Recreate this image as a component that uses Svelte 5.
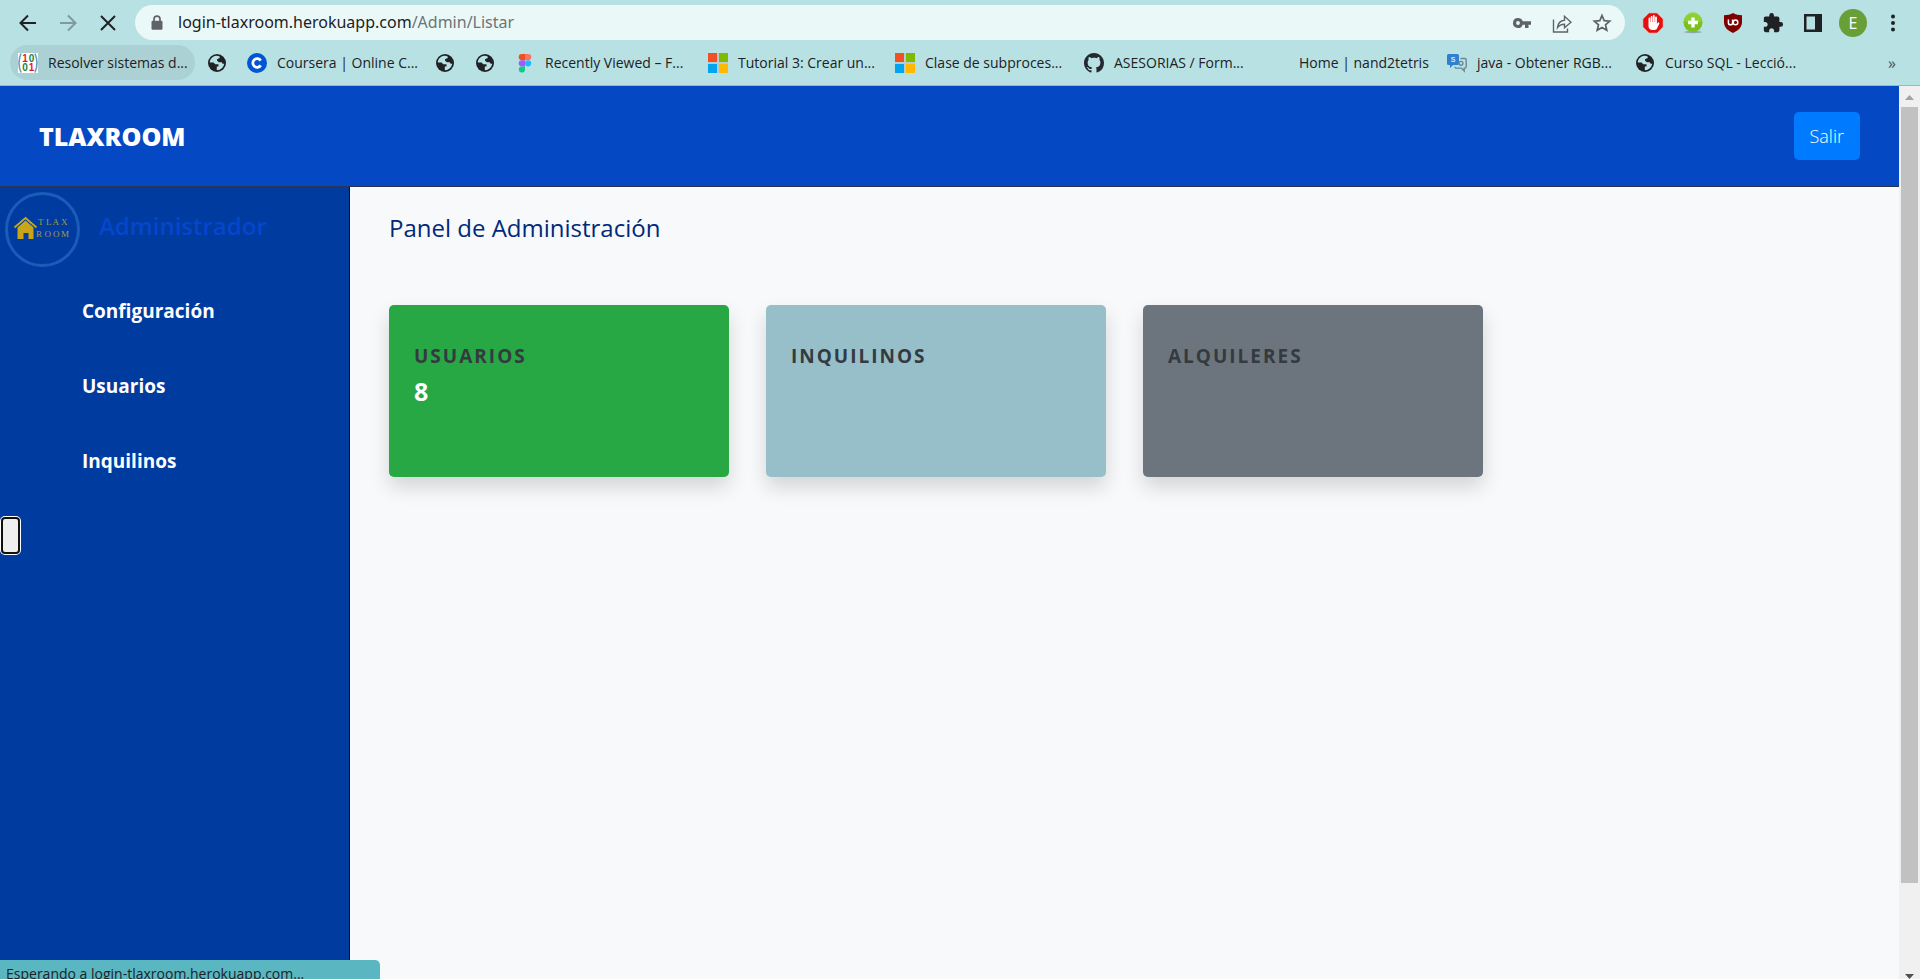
<script>
  const bookmarks = [
    { icon: 'matrix', label: 'Resolver sistemas d...', width: 139, active: true },
    { icon: 'globe', name: 'Sitio guardado' },
    { icon: 'coursera', label: 'Coursera | Online C...', width: 138 },
    { icon: 'globe', name: 'Sitio guardado' },
    { icon: 'globe', name: 'Sitio guardado' },
    { icon: 'figma', label: 'Recently Viewed – F...', width: 143 },
    { icon: 'microsoft', label: 'Tutorial 3: Crear un...', width: 137 },
    { icon: 'microsoft', label: 'Clase de subproces...', width: 139 },
    { icon: 'github', label: 'ASESORIAS / Form...', width: 135 },
    { icon: 'blank', label: 'Home | nand2tetris', width: 128 },
    { icon: 'stack', label: 'java - Obtener RGB...', width: 138 },
    { icon: 'globe', label: 'Curso SQL - Lecció...', width: 139 }
  ];

  const links = ['Configuración', 'Usuarios', 'Inquilinos'];

  const cards = [
    { title: 'Usuarios', value: '8', tone: 'green' },
    { title: 'Inquilinos', value: '', tone: 'teal' },
    { title: 'Alquileres', value: '', tone: 'gray' }
  ];
</script>

{#snippet favicon(kind)}
  {#if kind === 'globe'}
    <svg class="fav" viewBox="0 0 20 20" aria-hidden="true">
      <circle cx="10" cy="10" r="9" fill="#202124" />
      <path d="M9.200 2.800C5.500 3.200 3 6 2.800 9.600h3.800l1.600 1.700h3.300v2.200H9.800v3.700c3.700.1 7.100-2.900 7.400-6.700l-1.300.4-1.200-1.700h-2.900L10 7.600V6.200l2.700-1.200V3.500c-1-.5-2.300-.8-3.500-.7z" fill="#b8e1e4" />
      <path d="M12.300 3.200l1.500 1.200-.6 1.700-2.200.9v1.100h3.300l1.300 1.500 1.700-.5-1.200-3.700z" fill="#202124" />
    </svg>
  {:else if kind === 'matrix'}
    <svg class="fav" viewBox="0 0 20 20" aria-hidden="true">
      <rect width="20" height="20" fill="#fff" />
      <path d="M3 .5Q-1 10 3 19.500M17 .5Q21 10 17 19.500" fill="none" stroke="#6d9dbd" stroke-width="1.600" />
      <g font-family="Liberation Sans, sans-serif" font-weight="700" font-size="10" text-anchor="middle">
        <text x="7" y="9" fill="#e01b24">1</text><text x="13.500" y="9" fill="#26803a">0</text>
        <text x="7" y="18" fill="#26803a">0</text><text x="13.500" y="18" fill="#e01b24">1</text>
      </g>
    </svg>
  {:else if kind === 'coursera'}
    <svg class="fav" viewBox="0 0 20 20" aria-hidden="true">
      <circle cx="10" cy="10" r="10" fill="#0056d2" />
      <path d="M13.700 7.600a4.300 4.300 0 1 0 0 4.800" fill="none" stroke="#fff" stroke-width="2.800" />
    </svg>
  {:else if kind === 'figma'}
    <svg class="fav" viewBox="0 0 20 20" aria-hidden="true">
      <path d="M10 1H6.800a3.100 3.100 0 0 0 0 6.200H10z" fill="#f24e1e" />
      <path d="M10 1h3.200a3.100 3.100 0 0 1 0 6.200H10z" fill="#ff7262" />
      <path d="M10 7.200H6.800a3.100 3.100 0 0 0 0 6.200H10z" fill="#a259ff" />
      <circle cx="13.100" cy="10.300" r="3.100" fill="#1abcfe" />
      <path d="M10 13.400H6.800a3.100 3.100 0 1 0 3.200 3.100z" fill="#0acf83" />
    </svg>
  {:else if kind === 'microsoft'}
    <svg class="fav" viewBox="0 0 20 20" aria-hidden="true">
      <rect width="20" height="20" fill="#b9cdd0" />
      <path d="M0 0h9v9H0z" fill="#f25022" /><path d="M11 0h9v9h-9z" fill="#7fba00" />
      <path d="M0 11h9v9H0z" fill="#00a4ef" /><path d="M11 11h9v9h-9z" fill="#ffb900" />
    </svg>
  {:else if kind === 'github'}
    <svg class="fav" viewBox="0 0 16 16" aria-hidden="true">
      <path fill="#24292f" d="M8 0C3.580 0 0 3.580 0 8c0 3.540 2.290 6.530 5.470 7.590.4.070.55-.17.55-.38 0-.19-.01-.82-.01-1.490-2.010.37-2.530-.49-2.690-.94-.09-.23-.48-.94-.82-1.130-.28-.15-.68-.52-.01-.53.63-.01 1.080.58 1.230.82.72 1.210 1.870.87 2.330.66.07-.52.28-.87.51-1.070-1.780-.2-3.640-.89-3.640-3.950 0-.87.31-1.590.82-2.150-.08-.2-.36-1.020.08-2.120 0 0 .67-.21 2.200.82.64-.18 1.320-.27 2-.27s1.360.09 2 .27c1.530-1.040 2.200-.82 2.200-.82.44 1.100.16 1.920.08 2.120.51.56.82 1.270.82 2.150 0 3.070-1.870 3.750-3.650 3.950.29.25.54.73.54 1.480 0 1.070-.01 1.930-.01 2.200 0 .21.15.46.55.38A8.010 8.010 0 0 0 16 8c0-4.420-3.580-8-8-8z" />
    </svg>
  {:else if kind === 'stack'}
    <svg class="fav" viewBox="0 0 20 20" aria-hidden="true">
      <path d="M1.500 1h9a1.500 1.500 0 0 1 1.500 1.500v8a1.500 1.500 0 0 1-1.500 1.500H6l-3 3v-3H1.500A1.500 1.500 0 0 1 0 10.500v-8A1.500 1.500 0 0 1 1.500 1z" fill="#2f80d0" />
      <text x="6" y="9" font-family="Liberation Sans, sans-serif" font-size="7" font-weight="700" fill="#d5ebf5" text-anchor="middle">S</text>
      <path d="M13.500 5.500h4.300a1.400 1.400 0 0 1 1.400 1.400v6.800a1.400 1.400 0 0 1-1.400 1.400h-.6v3l-2.900-3H9.400A1.400 1.400 0 0 1 8 13.700" fill="none" stroke="#6b8790" stroke-width="1.400" />
      <circle cx="14" cy="10.300" r="1.900" fill="none" stroke="#6b8790" stroke-width="1.400" />
    </svg>
  {:else}
    <span class="fav"></span>
  {/if}
{/snippet}

<div class="window">
  <div class="toolbar">
    <button class="tool" aria-label="Atrás">
      <svg width="20" height="20" viewBox="0 0 20 20"><path d="M18 10H3M10 2.500L2.500 10l7.500 7.500" fill="none" stroke="#202124" stroke-width="2" /></svg>
    </button>
    <button class="tool" aria-label="Adelante">
      <svg width="20" height="20" viewBox="0 0 20 20"><path d="M2 10h15M10 2.500l7.500 7.500-7.500 7.500" fill="none" stroke="#7e9a9d" stroke-width="2" /></svg>
    </button>
    <button class="tool" aria-label="Detener">
      <svg width="20" height="20" viewBox="0 0 20 20"><path d="M3 3l14 14M17 3L3 17" fill="none" stroke="#202124" stroke-width="2" /></svg>
    </button>

    <div class="omnibox">
      <svg width="14" height="16" viewBox="0 0 14 16" aria-hidden="true">
        <path d="M4 7V4.200a3 3 0 0 1 6 0V7" fill="none" stroke="#5f6368" stroke-width="1.700" />
        <rect x="1.500" y="5.800" width="11" height="9" rx="1.200" fill="#5f6368" />
      </svg>
      <div class="url">login-tlaxroom.herokuapp.com<span>/Admin/Listar</span></div>
      <button class="tool" aria-label="Contraseñas">
        <svg width="20" height="20" viewBox="0 0 20 20">
          <path d="M6 5a5 5 0 1 0 4.700 6.700H13V15h3.500v-3.300H19V8.300h-8.300A5 5 0 0 0 6 5zm0 3.100a1.900 1.900 0 1 1 0 3.800 1.900 1.900 0 0 1 0-3.800z" fill="#5f6368" fill-rule="evenodd" />
        </svg>
      </button>
      <button class="tool" aria-label="Compartir">
        <svg width="20" height="20" viewBox="0 0 20 20">
          <path d="M1.500 6.500V19h14v-3.500M5.500 14.500c.5-4.500 3-7 7-7.300V3.300L19 9.200l-6.500 5.600v-3.600c-3 0-5.200.8-7 3.300z" fill="none" stroke="#5f6368" stroke-width="1.400" />
        </svg>
      </button>
      <button class="tool" aria-label="Agregar a favoritos">
        <svg width="20" height="20" viewBox="0 0 20 20">
          <path d="M10 2.500l2.200 5.100 5.500.5-4.200 3.700 1.300 5.500L10 14.400l-4.800 2.900 1.300-5.500-4.200-3.700 5.500-.5z" fill="none" stroke="#5f6368" stroke-width="1.700" />
        </svg>
      </button>
    </div>

    <button class="tool" aria-label="AdBlock">
      <svg width="22" height="22" viewBox="0 0 22 22">
        <path d="M7 1h8l6 6v8l-6 6H7l-6-6V7z" fill="#e60f0f" stroke="#f5a0a0" stroke-width=".6" />
        <path d="M6.500 11V6.500a.9.900 0 0 1 1.800 0V10h.4V4.900a.9.900 0 0 1 1.800 0V10h.4V4a.9.900 0 0 1 1.800 0v6h.4V5.300a.9.900 0 0 1 1.800 0V12l.8-1.300a1 1 0 0 1 1.700.9l-2.400 5c-.5 1-1.300 1.400-2.400 1.400h-2c-2.500 0-4.100-1.600-4.100-4z" fill="#fff" />
      </svg>
    </button>
    <button class="tool" aria-label="Complemento">
      <svg width="22" height="22" viewBox="0 0 22 22">
        <ellipse cx="11" cy="20" rx="9" ry="1.200" fill="#8fa9ab" />
        <circle cx="11" cy="10.500" r="9.500" fill="#7ac11c" />
        <path d="M2 9a9 9 0 0 1 18 0c-5 3-12 3-18 0z" fill="#97d63e" opacity=".7" />
        <path d="M11 5.500v10M6 10.500h10" stroke="#fff" stroke-width="3.400" />
      </svg>
    </button>
    <button class="tool" aria-label="uBlock">
      <svg width="22" height="22" viewBox="0 0 22 22">
        <path d="M11 1c2.500 1.500 5.500 2.200 9 2.200V10c0 5.500-4 8.600-9 11-5-2.400-9-5.500-9-11V3.200C5.500 3.200 8.500 2.500 11 1z" fill="#800000" />
        <path d="M6.400 7.500v3.200a2.100 2.100 0 0 0 4.200 0V7.500" fill="none" stroke="#fff" stroke-width="1.500" />
        <circle cx="13.500" cy="10.400" r="2.300" fill="none" stroke="#fff" stroke-width="1.500" />
      </svg>
    </button>
    <button class="tool" aria-label="Extensiones">
      <svg width="22" height="22" viewBox="0 0 24 24">
        <path fill="#202124" d="M20.500 11H19V7c0-1.100-.9-2-2-2h-4V3.500a2.500 2.500 0 0 0-5 0V5H4c-1.100 0-1.990.9-1.990 2v3.800H3.500c1.490 0 2.700 1.210 2.700 2.700s-1.210 2.700-2.700 2.700H2V20c0 1.100.9 2 2 2h3.800v-1.500c0-1.490 1.210-2.700 2.700-2.700s2.700 1.210 2.700 2.700V22H17c1.100 0 2-.9 2-2v-4h1.500a2.500 2.500 0 0 0 0-5z" />
      </svg>
    </button>
    <button class="tool" aria-label="Panel lateral">
      <svg width="18" height="18" viewBox="0 0 18 18"><path d="M0 0h18v18H0zM2.500 2.500v13H11v-13z" fill="#202124" fill-rule="evenodd" /></svg>
    </button>
    <button class="tool" aria-label="Perfil"><span class="avatar">E</span></button>
    <button class="tool" aria-label="Menú">
      <svg width="6" height="18" viewBox="0 0 6 18" fill="#202124"><circle cx="3" cy="2.500" r="2" /><circle cx="3" cy="9" r="2" /><circle cx="3" cy="15.500" r="2" /></svg>
    </button>
  </div>

  <nav class="bookmarks" aria-label="Marcadores">
    {#each bookmarks as b}
      <a href="#marcador" class="bookmark" class:active={b.active} aria-label={b.name}>
        {@render favicon(b.icon)}
        {#if b.label}<span class="label" style:width="{b.width}px">{b.label}</span>{/if}
      </a>
    {/each}
    <button class="more" aria-label="Más marcadores">»</button>
  </nav>

  <div class="viewport">
    <div class="page">
      <header>
        <a href="#inicio" class="brand">TLAXROOM</a>
        <button class="exit">Salir</button>
      </header>
      <div class="body">
        <aside>
          <div class="profile">
            <svg width="75" height="75" viewBox="0 0 75 75" role="img" aria-label="Tlax Room">
              <circle cx="37.500" cy="37.500" r="36" fill="none" stroke="#1a5db8" stroke-width="3" />
              <path d="M9.500 35.500L20.500 26l11 9.500" fill="none" stroke="#c9a517" stroke-width="1.800" />
              <path d="M12.500 35.500l8-7 8 7V47h-5v-6h-5v6h-6z" fill="#c9a517" />
              <g font-family="Liberation Serif, serif" font-size="9" fill="#a39b3c">
                <text x="33 41 47.500 56" y="33">TLAX</text>
                <text x="31 39.500 48 56" y="45">ROOM</text>
              </g>
            </svg>
            <h2>Administrador</h2>
          </div>
          <nav class="menu" aria-label="Principal">
            {#each links as link}
              <a href="#{link}">{link}</a>
            {/each}
          </nav>
          <button class="toggle" aria-label="Contraer menú"></button>
        </aside>
        <main>
          <h1>Panel de Administración</h1>
          <div class="cards">
            {#each cards as card}
              <section class="card {card.tone}">
                <h3>{card.title}</h3>
                <p>{card.value}</p>
              </section>
            {/each}
          </div>
        </main>
      </div>
    </div>
    <div class="scrollbar" aria-hidden="true">
      <svg width="21" height="21" viewBox="0 0 21 21"><path d="M6 14l4.500-5 4.500 5z" fill="#a3a3a3" /></svg>
      <div class="track"><div class="thumb"></div></div>
      <svg width="21" height="10" viewBox="0 0 21 10"><path d="M6 5h9l-4.500 5z" fill="#505050" /></svg>
    </div>
  </div>

  <div class="status">Esperando a login-tlaxroom.herokuapp.com...</div>
</div>

<style>
  :global(body) {
    margin: 0;
    font-family: 'Open Sans', 'Noto Sans', sans-serif;
  }
  button {
    font: inherit;
    border: 0;
    padding: 0;
    background: none;
  }
  a {
    color: inherit;
    text-decoration: none;
  }
  h1, h2, h3, p {
    margin: 0;
  }
  .window {
    position: relative;
    display: flex;
    flex-direction: column;
    height: 100vh;
    overflow: hidden;
    background: #b8e1e4;
    color: #202124;
  }
  .toolbar {
    display: flex;
    align-items: center;
    height: 35px;
    padding: 5px 7px 5px 8px;
  }
  .tool {
    display: flex;
    align-items: center;
    justify-content: center;
    flex: none;
    width: 40px;
    height: 35px;
  }
  .omnibox {
    display: flex;
    align-items: center;
    flex: 1;
    height: 35px;
    margin: 0 8px 0 7px;
    padding: 0 3px 0 15px;
    border-radius: 18px;
    background: #ebf8f8;
  }
  .url {
    flex: 1;
    margin-left: 14px;
    font-family: 'Noto Sans', 'Open Sans', sans-serif;
    font-size: 16px;
    line-height: 35px;
  }
  .url span {
    color: #6b7476;
  }
  .avatar {
    width: 28px;
    border-radius: 50%;
    background: #689f38;
    color: #fff;
    font-size: 16px;
    line-height: 28px;
  }
  .bookmarks {
    display: flex;
    align-items: center;
    gap: 4px;
    padding: 0 16px 5px 10px;
    border-bottom: 1px solid #93bcc4;
    font-size: 14px;
  }
  .bookmark {
    display: flex;
    align-items: center;
    gap: 10px;
    height: 35px;
    padding: 0 8px;
    border-radius: 18px;
    white-space: nowrap;
  }
  .bookmark.active {
    background: #acd1d4;
  }
  .fav {
    flex: none;
    width: 20px;
    height: 20px;
  }
  .more {
    margin-left: auto;
    padding: 0 8px;
    color: #4a5557;
    font-size: 16px;
  }
  .viewport {
    display: flex;
    flex: 1;
    min-height: 0;
  }
  .page {
    display: flex;
    flex-direction: column;
    flex: 1;
    background: #f8f9fb;
  }
  header {
    display: flex;
    align-items: center;
    justify-content: space-between;
    padding: 26px 39px;
    border-bottom: 1px solid #2c3550;
    background: #0449c3;
  }
  .brand {
    color: #fff;
    font-size: 25px;
    font-weight: 800;
    line-height: 48px;
  }
  .exit {
    padding: 0 16px;
    border-radius: 5px;
    background: #007bff;
    color: #fff;
    font-size: 18px;
    font-weight: 300;
    line-height: 48px;
  }
  .body {
    display: flex;
    flex: 1;
  }
  aside {
    flex: none;
    width: 349px;
    border-right: 1px solid #001233;
    background: #003b9f;
  }
  .profile {
    display: flex;
    gap: 19px;
    padding: 5px;
  }
  .profile h2 {
    color: #0646cd;
    font-size: 24px;
    font-weight: 600;
    line-height: 68px;
  }
  .menu {
    display: flex;
    flex-direction: column;
    padding: 2px 82px 0;
    color: #fff;
    font-size: 19px;
    font-weight: 700;
    line-height: 75px;
  }
  .toggle {
    display: block;
    width: 19px;
    height: 37px;
    margin: 18px 0 0 1px;
    border: 2px solid #101010;
    border-radius: 4px;
    box-shadow: 0 0 0 1px #fff;
    background: #efefef;
  }
  main {
    flex: 1;
    padding: 24px 39px;
  }
  h1 {
    color: #00297a;
    font-size: 24px;
    font-weight: 400;
    line-height: 34px;
  }
  .cards {
    display: grid;
    grid-template-columns: repeat(4, 1fr);
    gap: 37px;
    margin-top: 60px;
  }
  .card {
    min-height: 110px;
    padding: 36px 25px 26px;
    border-radius: 5px;
    box-shadow: 0 10px 20px rgba(0, 0, 0, 0.15);
  }
  .card h3 {
    color: #343a40;
    font-size: 19px;
    font-weight: 700;
    line-height: 30px;
    letter-spacing: 2px;
    text-transform: uppercase;
  }
  .card p {
    color: #fff;
    font-size: 25px;
    font-weight: 700;
    line-height: 40px;
  }
  .green { background: #28a745; }
  .teal { background: #96bfc9; }
  .gray { background: #6c757d; }
  .scrollbar {
    display: flex;
    flex-direction: column;
    width: 21px;
    background: #f0f0f0;
  }
  .track {
    flex: 1;
    padding: 0 2px;
  }
  .thumb {
    height: 90%;
    background: #c1c1c1;
  }
  .status {
    position: absolute;
    left: 0;
    bottom: 0;
    box-sizing: border-box;
    width: 380px;
    height: 19px;
    padding-left: 6px;
    border-top-right-radius: 5px;
    overflow: hidden;
    background: #5ab7c1;
    font-size: 14px;
    line-height: 28px;
  }
</style>
